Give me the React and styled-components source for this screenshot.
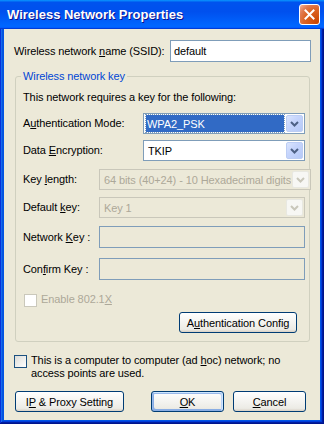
import React from 'react';
import styled, { createGlobalStyle, css } from 'styled-components';

const GlobalStyle = createGlobalStyle`
  html, body {
    margin: 0;
    padding: 0;
    background: #fff;
  }
  body {
    font-family: 'Liberation Sans', Arial, sans-serif;
    font-size: 11px;
    letter-spacing: -0.1px;
    color: #000;
  }
`;

const Window = styled.div`
  width: 324px;
  height: 424px;
  box-sizing: border-box;
  display: flex;
  flex-direction: column;
  background: #0055e5;
  box-shadow: inset -1px -1px #00138c, inset 1px 0 #0831d9, inset -2px -2px #001ea0,
    inset 2px 0 #166aee, inset -3px -3px #003bda, inset 3px 0 #0855dd;
`;

const TitleBar = styled.div`
  height: 29px;
  flex: none;
  display: flex;
  align-items: center;
  justify-content: space-between;
  padding: 0 4px 0 7px;
  box-sizing: border-box;
  background: linear-gradient(180deg, #0997ff, #0053ee 8%, #0050ee 40%, #0066ff 88%,
    #0066ff 93%, #005bff 95%, #003dd7 96%, #003dd7);
`;

const Title = styled.span`
  font-family: 'Liberation Sans', Arial, sans-serif;
  font-weight: bold;
  font-size: 13px;
  letter-spacing: 0;
  color: #fff;
  text-shadow: 1px 1px #0f1089;
`;

const CloseButton = styled.div`
  width: 21px;
  height: 21px;
  box-sizing: border-box;
  border: 1px solid #fff;
  border-radius: 3px;
  display: flex;
  align-items: center;
  justify-content: center;
  background: radial-gradient(circle at 90% 90%, #cc4600 0%, #dc6527 55%, #e07a50 75%, #f5b49a 100%);
`;

const Client = styled.div`
  flex: 1;
  margin: 0 4px 4px;
  background: #ece9d8;
  padding: 0 9px 0 10px;
  display: flex;
  flex-direction: column;
`;

const Row = styled.div`
  display: flex;
  align-items: center;
  height: ${(p) => p.$h || 21}px;
  margin-top: ${(p) => p.$top || 0}px;
`;

const Label = styled.span`
  width: ${(p) => (p.$w ? `${p.$w}px` : 'auto')};
  flex: none;
  line-height: 13px;
  white-space: nowrap;
  color: ${(p) => (p.$disabled ? '#aca899' : '#000')};
`;

const TextBox = styled.div`
  height: ${(p) => p.$h || 22}px;
  box-sizing: border-box;
  border: 1px solid #7f9db9;
  background: ${(p) => (p.$disabled ? '#ece9d8' : '#fff')};
  flex: 1;
  display: flex;
  align-items: center;
  padding-left: 3px;
`;

const Combo = styled.div`
  flex: 1;
  height: 21px;
  box-sizing: border-box;
  border: 1px solid ${(p) => (p.$disabled ? '#c9c7ba' : '#7f9db9')};
  background: ${(p) => (p.$disabled ? '#ece9d8' : '#fff')};
  display: flex;
  align-items: center;
  padding: 1px;
  gap: 1px;
`;

const ComboValue = styled.div`
  flex: 1;
  height: 17px;
  min-width: 0;
  overflow: hidden;
  white-space: nowrap;
  display: flex;
  align-items: center;
  padding-left: 3px;
  box-sizing: border-box;
  color: ${(p) => (p.$disabled ? '#aca899' : '#000')};
  ${(p) =>
    p.$selected &&
    css`
      margin: 0 1px 0 1px;
      padding-left: 1px;
      background: #316ac5;
      color: #fff;
      outline: 1px dotted #7f9db9;
    `}
`;

const DropButton = styled.div`
  width: 17px;
  height: 17px;
  flex: none;
  box-sizing: border-box;
  border-radius: 2px;
  display: flex;
  align-items: center;
  justify-content: center;
  ${(p) =>
    p.$disabled
      ? css`
          background: #f7f7f4;
          border: 1px solid #e8e8e1;
        `
      : css`
          background: linear-gradient(135deg, #dbe5fd 0%, #c6d5fc 40%, #b5c9f7 100%);
          border: 1px solid #bccdf4;
        `}
`;

const Group = styled.fieldset`
  margin: 8px 1px 0 1px;
  padding: 8px 4px 8px 7px;
  border: 1px solid #d0d0bf;
  border-radius: 3px;
  min-width: 0;
  display: flex;
  flex-direction: column;
`;

const Legend = styled.legend`
  color: #0046d5;
  line-height: 13px;
  padding: 0 2px;
  margin-left: -2px;
`;

const Text = styled.div`
  line-height: 13px;
  color: ${(p) => (p.$disabled ? '#aca899' : '#000')};
`;

const Check = styled.span`
  width: 13px;
  height: 13px;
  flex: none;
  box-sizing: border-box;
  border: 1px solid ${(p) => (p.$disabled ? '#cac8bb' : '#1c5180')};
  background: ${(p) => (p.$disabled ? '#fff' : 'linear-gradient(135deg, #dcdcd7, #fff)')};
  margin-right: 4px;
`;

const CheckRow = styled.div`
  display: flex;
  align-items: flex-start;
  margin-top: ${(p) => p.$top || 0}px;
  margin-left: ${(p) => p.$left || 0}px;
  & > ${Check} {
    margin-top: 1px;
  }
`;

const Button = styled.div`
  width: ${(p) => p.$w}px;
  height: 21px;
  box-sizing: border-box;
  border: 1px solid #003c74;
  border-radius: 3px;
  background: linear-gradient(180deg, #fff, #ecebe5 86%, #d8d0c4);
  display: flex;
  align-items: center;
  justify-content: center;
  margin-left: ${(p) => p.$left || 0}px;
  ${(p) =>
    p.$default &&
    css`
      box-shadow: inset -1px 1px #cee7ff, inset 1px 2px #98b8ea, inset -2px 2px #bcd4f6,
        inset 1px -1px #89ade4, inset 2px -2px #89ade4;
    `}
`;

const ButtonRow = styled.div`
  display: flex;
  margin-top: ${(p) => p.$top || 0}px;
  padding-left: ${(p) => p.$left || 0}px;
  padding-right: ${(p) => p.$right || 0}px;
  justify-content: ${(p) => p.$justify || 'flex-start'};
`;

const Spacer = styled.div`
  flex: 1;
`;

const Chevron = ({ disabled }) => (
  <svg width="9" height="6" viewBox="0 0 9 6">
    <path
      d="M1 1 L4.5 4.5 L8 1"
      fill="none"
      stroke={disabled ? '#c9c7ba' : '#4d6185'}
      strokeWidth="2"
    />
  </svg>
);

const CloseX = () => (
  <svg width="11" height="11" viewBox="0 0 11 11">
    <path d="M1.5 1.5 L9.5 9.5 M9.5 1.5 L1.5 9.5" stroke="#fff" strokeWidth="2" strokeLinecap="square" />
  </svg>
);

const ComboBox = ({ value, disabled, selected }) => (
  <Combo $disabled={disabled}>
    <ComboValue $disabled={disabled} $selected={selected}>{value}</ComboValue>
    <DropButton $disabled={disabled}>
      <Chevron disabled={disabled} />
    </DropButton>
  </Combo>
);

export default function App() {
  return (
    <>
      <GlobalStyle />
      <Window>
        <TitleBar>
          <Title>Wireless Network Properties</Title>
          <CloseButton>
            <CloseX />
          </CloseButton>
        </TitleBar>
        <Client>
          <Row $h={22} $top={11}>
            <Label $w={156}>
              Wireless network <u>n</u>ame (SSID):
            </Label>
            <TextBox>default</TextBox>
          </Row>

          <Group>
            <Legend>Wireless network key</Legend>
            <Text>This network requires a key for the following:</Text>
            <Row $top={9}>
              <Label $w={120}>
                A<u>u</u>thentication Mode:
              </Label>
              <ComboBox value="WPA2_PSK" selected />
            </Row>
            <Row $top={6}>
              <Label $w={120}>
                Data <u>E</u>ncryption:
              </Label>
              <ComboBox value="TKIP" />
            </Row>
            <Row $top={8}>
              <Label $w={76}>
                Key <u>l</u>ength:
              </Label>
              <ComboBox value="64 bits (40+24) - 10 Hexadecimal digits" disabled />
            </Row>
            <Row $top={7}>
              <Label $w={76}>
                Default <u>k</u>ey:
              </Label>
              <ComboBox value="Key 1" disabled />
            </Row>
            <Row $h={22} $top={8}>
              <Label $w={76}>
                Network <u>K</u>ey :
              </Label>
              <TextBox $disabled />
            </Row>
            <Row $h={22} $top={10}>
              <Label $w={76}>
                Con<u>f</u>irm Key :
              </Label>
              <TextBox $disabled />
            </Row>
            <CheckRow $top={13} $left={1}>
              <Check $disabled />
              <Text $disabled>
                Enable 802.1<u>X</u>
              </Text>
            </CheckRow>
            <ButtonRow $top={5} $justify="flex-end" $right={8}>
              <Button $w={118}>
                <span>
                  A<u>u</u>thentication Config
                </span>
              </Button>
            </ButtonRow>
          </Group>

          <CheckRow $top={12}>
            <Check />
            <Text>
              This is a computer to computer (ad <u>h</u>oc) network; no
              <br />
              access points are used.
            </Text>
          </CheckRow>

          <ButtonRow $top={11} $left={1} $right={5}>
            <Button $w={109}>
              <span>
                I<u>P</u> &amp; Proxy Setting
              </span>
            </Button>
            <Spacer />
            <Button $w={73} $default>
              <span>
                <u>O</u>K
              </span>
            </Button>
            <Button $w={73} $left={9}>
              <span>
                <u>C</u>ancel
              </span>
            </Button>
          </ButtonRow>
        </Client>
      </Window>
    </>
  );
}
